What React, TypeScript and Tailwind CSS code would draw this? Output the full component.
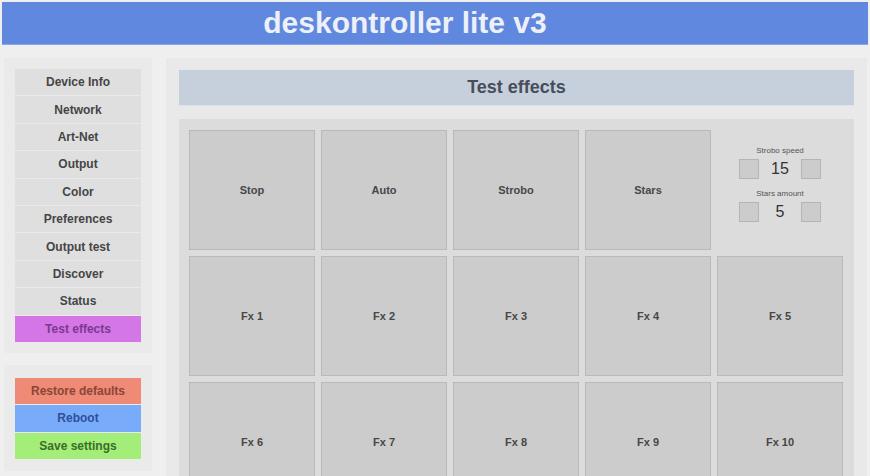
import React from "react";

// Sidebar navigation entries
const menu = [
  "Device Info",
  "Network",
  "Art-Net",
  "Output",
  "Color",
  "Preferences",
  "Output test",
  "Discover",
  "Status",
  "Test effects",
];

const fxButtons = ["Fx 1", "Fx 2", "Fx 3", "Fx 4", "Fx 5", "Fx 6", "Fx 7", "Fx 8", "Fx 9", "Fx 10"];

const FxButton = ({ label }: { label: string }) => (
  <button className="h-[120px] bg-[#cccccc] border border-[#b9b9b9] text-[11px] font-bold text-[#474747] flex items-center justify-center">
    {label}
  </button>
);

const Stepper = ({ label, value }: { label: string; value: number }) => (
  <div className="flex flex-col items-center">
    <div className="text-[8px] text-[#555] leading-[10px]">{label}</div>
    <div className="flex items-center mt-[3px]">
      <button className="w-[20px] h-[20px] bg-[#cccccc] border border-[#b5b5b5]" />
      <div className="w-[42px] text-center text-[16px] text-[#333] leading-[20px]">{value}</div>
      <button className="w-[20px] h-[20px] bg-[#cccccc] border border-[#b5b5b5]" />
    </div>
  </div>
);

export default function App() {
  return (
    <div
      className="w-full h-[476px] overflow-hidden bg-[#f0efef] pt-[2px]"
      style={{ fontFamily: '"Liberation Sans", Arial, sans-serif' }}
    >
      {/* Header */}
      <div className="mx-[2px] h-[43px] bg-[#5f88de] border-b border-[#8aa6ea] flex items-center justify-center pr-[60px]">
        <h1 className="text-[30px] font-bold text-[#eef0f8] leading-none">deskontroller lite v3</h1>
      </div>

      <div className="flex pt-[13px] pl-[4px] pr-[3px]">
        {/* Sidebar */}
        <div className="w-[148px] flex flex-col gap-[12px]">
          <div className="bg-[#eaeaea] px-[11px] pt-[11px] pb-[11px] flex flex-col gap-px">
            {menu.map((m) => (
              <div
                key={m}
                className={`h-[26.4px] flex items-center justify-center text-[12px] font-bold ${
                  m === "Test effects" ? "bg-[#d576e6] text-[#7a3a90]" : "bg-[#dfdfdf] text-[#454545]"
                }`}
              >
                {m}
              </div>
            ))}
          </div>
          <div className="bg-[#eaeaea] px-[11px] pt-[13px] pb-[12px] flex flex-col gap-px">
            <div className="h-[26.4px] flex items-center justify-center text-[12px] font-bold bg-[#ee8a76] text-[#8d4536]">
              Restore defaults
            </div>
            <div className="h-[26.4px] flex items-center justify-center text-[12px] font-bold bg-[#78acfa] text-[#2f4f9c]">
              Reboot
            </div>
            <div className="h-[26.4px] flex items-center justify-center text-[12px] font-bold bg-[#a2ee78] text-[#3d6b2a]">
              Save settings
            </div>
          </div>
        </div>

        {/* Main panel */}
        <div className="flex-1 ml-[14px] bg-[#e9e9e9] px-[13px] pt-[12px] h-[420px]">
          <div className="h-[36px] bg-[#c6cfdc] border-b border-[#dde3ea] flex items-center justify-center">
            <h2 className="text-[18px] font-bold text-[#474d5a]">Test effects</h2>
          </div>
          <div className="mt-[13px] bg-[#dcdcdc] pl-[10px] pr-[11px] pt-[11px] pb-[10px]">
            <div className="grid grid-cols-5 gap-[6px]">
              <FxButton label="Stop" />
              <FxButton label="Auto" />
              <FxButton label="Strobo" />
              <FxButton label="Stars" />
              <div className="h-[120px] flex flex-col items-center pt-[16px] gap-[10px]">
                <Stepper label="Strobo speed" value={15} />
                <Stepper label="Stars amount" value={5} />
              </div>
              {fxButtons.map((f) => (
                <FxButton key={f} label={f} />
              ))}
            </div>
          </div>
        </div>
      </div>
    </div>
  );
}
